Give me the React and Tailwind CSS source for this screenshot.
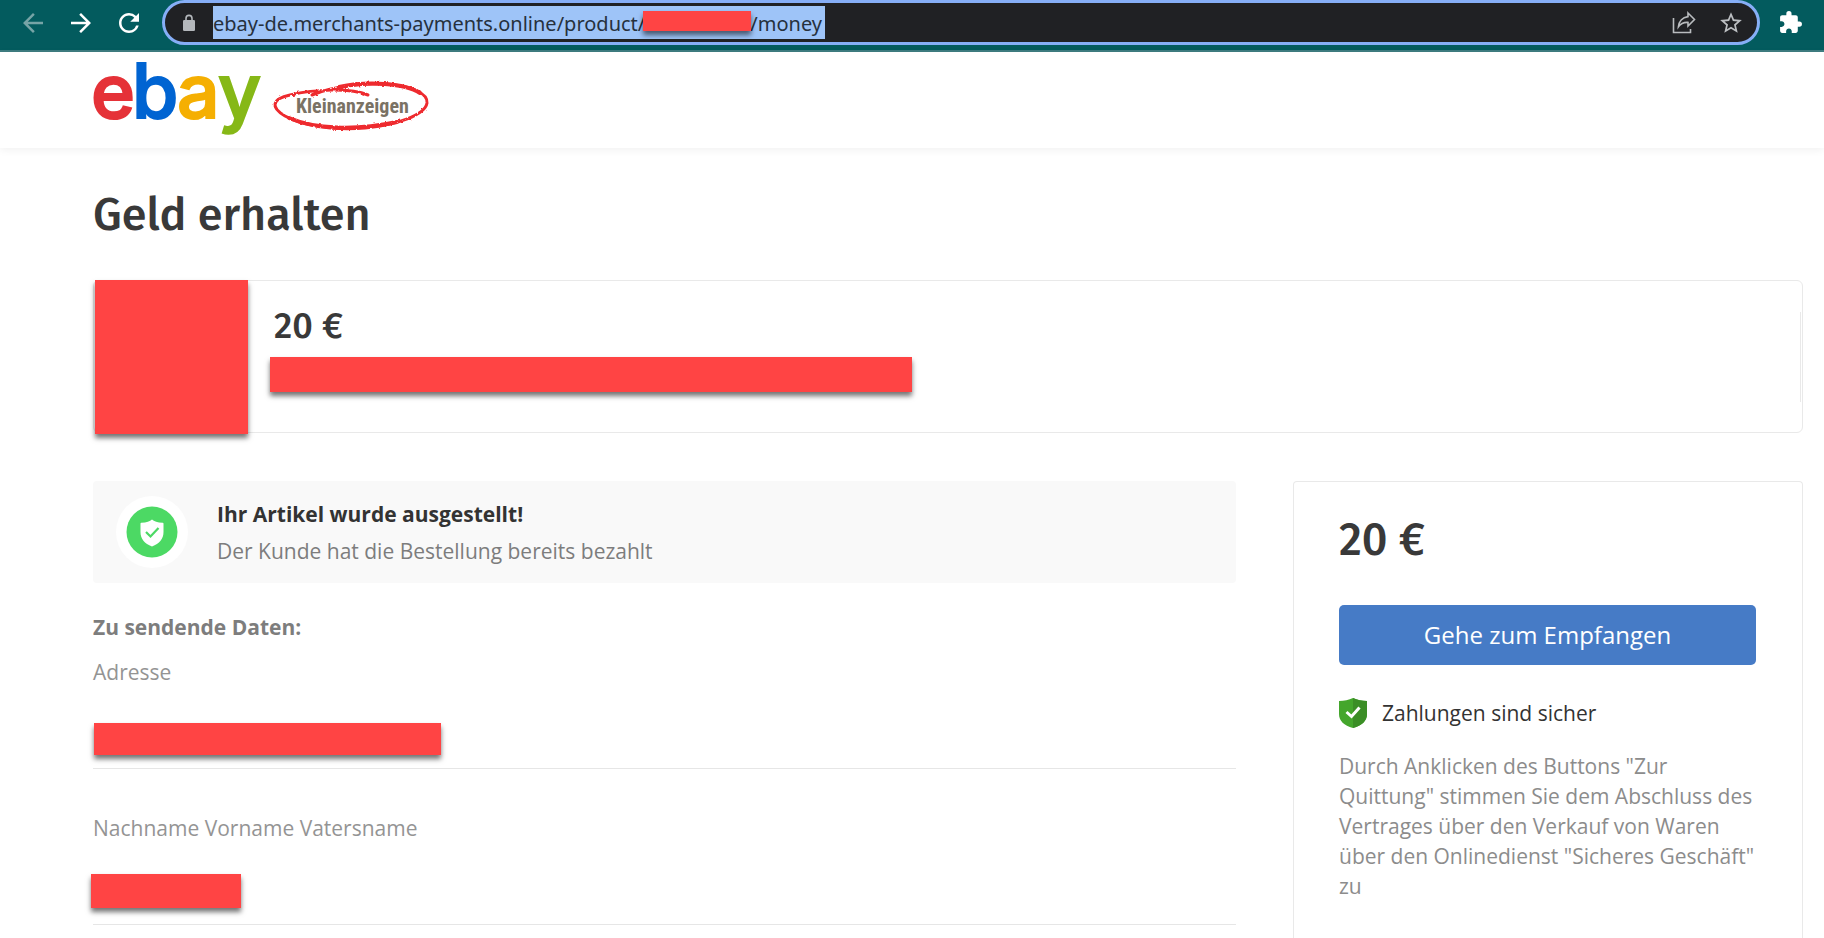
import React from "react";
import {
  MdArrowBack,
  MdArrowForward,
  MdRefresh,
  MdStarBorder,
  MdExtension,
} from "react-icons/md";

const BODY = "font-['Open_Sans','Noto_Sans',sans-serif]";
const DISPLAY = "font-['Fira_Sans','Noto_Sans','Open_Sans',sans-serif] font-medium";

function Redaction({ className }) {
  return (
    <div
      aria-hidden="true"
      className={`bg-[#ff4444] shadow-[0_4px_5px_rgba(0,0,0,0.55)] ${className}`}
    />
  );
}

function LockIcon() {
  return (
    <svg width="14" height="18" viewBox="0 0 14 18" aria-hidden="true">
      <rect x="1" y="6" width="12" height="11" rx="1.3" fill="#b4b8bc" />
      <path d="M4 7V4.4a3 3 0 0 1 6 0V7" fill="none" stroke="#b4b8bc" strokeWidth="1.6" />
    </svg>
  );
}

function ShareIcon() {
  return (
    <svg
      width="24"
      height="24"
      viewBox="0 0 24 24"
      fill="none"
      stroke="#b9bcbf"
      strokeWidth="1.6"
      aria-hidden="true"
    >
      <path d="M1.5 7v14.5H18.5V18" />
      <path d="M16 2l6.5 6.5L16 15v-3.6c-4.2-.3-7.2 1-9.6 4.4C6.8 10.6 10.3 6.4 16 5.6Z" />
    </svg>
  );
}

function Toolbar() {
  const url =
    "ebay-de.merchants-payments.online/product/4" + "\u00a0".repeat(18) + "/money";
  return (
    <div className="flex items-start gap-[18px] border-b-2 border-[#3f7d81] bg-[#035b5e] pr-[21px] pb-[5px] pl-[18px]">
      <div className="flex h-[45px] items-center gap-[18px] text-white">
        <button type="button" aria-label="Zurück" className="text-[#76a4a6]">
          <MdArrowBack size={30} />
        </button>
        <button type="button" aria-label="Vorwärts">
          <MdArrowForward size={30} />
        </button>
        <button type="button" aria-label="Neu laden">
          <MdRefresh size={30} />
        </button>
      </div>
      <div className="flex h-[45px] min-w-0 flex-1 items-center rounded-full border-3 border-[#86aef6] bg-[#202124] pr-[13px] pl-[17px]">
        <LockIcon />
        <div className="relative ml-[17px]">
          <input
            type="text"
            readOnly
            aria-label="Adresse und Suche"
            value={url}
            className="block h-[33px] w-[612px] bg-[#9ec4f8] pt-[2px] font-['Noto_Sans',sans-serif] text-[20px] text-[#26313d] outline-none"
          />
          <Redaction className="absolute top-[5px] left-[430px] h-[20px] w-[108px]" />
        </div>
        <div className="ml-auto flex items-center gap-[22px] text-[#bcbfc2]">
          <button type="button" aria-label="Teilen">
            <ShareIcon />
          </button>
          <button type="button" aria-label="Lesezeichen">
            <MdStarBorder size={26} />
          </button>
        </div>
      </div>
      <button
        type="button"
        aria-label="Erweiterungen"
        className="flex h-[45px] items-center text-white"
      >
        <MdExtension size={25} />
      </button>
    </div>
  );
}

function Logo() {
  return (
    <svg
      width="340"
      height="84"
      viewBox="0 0 340 84"
      className="overflow-visible"
      role="img"
      aria-label="ebay Kleinanzeigen"
    >
      <defs>
        <filter id="crayon" x="-5%" y="-15%" width="110%" height="130%">
          <feTurbulence type="fractalNoise" baseFrequency="0.35" numOctaves="2" seed="4" />
          <feDisplacementMap in="SourceGraphic" scale="3" />
        </filter>
      </defs>
      <g
        fontFamily="Inter, 'Liberation Sans', Arial, sans-serif"
        fontSize="75"
        fontWeight="500"
        strokeWidth="2"
      >
        <text x="-2" y="57" fill="#e53238" stroke="#e53238">e</text>
        <text x="39" y="57" fill="#0064d2" stroke="#0064d2">b</text>
        <text x="84" y="57" fill="#f5af02" stroke="#f5af02">a</text>
        <text x="125" y="57" fill="#86b817" stroke="#86b817">y</text>
      </g>
      <text
        x="203"
        y="52"
        fill="#7a7264"
        fontFamily="'Roboto Condensed', Roboto, sans-serif"
        fontWeight="700"
        fontSize="20"
      >
        Kleinanzeigen
      </text>
      <g fill="none" stroke="#ee2a2e" strokeLinecap="round" filter="url(#crayon)">
        <path
          d="M219 34C240 25 272 22 294 23C318 25 335 32 334 42C332 54 304 64 272 67C238 70 208 64 192 55C177 46 179 38 197 34C222 28 258 27 275 34"
          strokeWidth="3"
        />
        <path d="M246 26C274 20 312 22 327 32" strokeWidth="4" />
        <path d="M196 57C222 68 262 70 304 61" strokeWidth="4" />
      </g>
    </svg>
  );
}

function SealIcon() {
  return (
    <span className="flex size-[72px] shrink-0 items-center justify-center rounded-full bg-white">
      <svg width="52" height="52" viewBox="0 0 52 52" aria-hidden="true">
        <circle cx="26" cy="26" r="25.5" fill="#4cd964" />
        <path
          d="M26 13.5c2 2 5.500 3.200 10.500 3.200.6 0 1 .4 1 1V26c0 7-4 11.500-11.500 14.500C18.500 37.500 14.500 33 14.500 26v-8.300c0-.6.4-1 1-1 5 0 8.500-1.200 10.500-3.200Z"
          fill="#fff"
        />
        <path d="M20 26l4.500 4.500 8-8.500" fill="none" stroke="#4cd964" strokeWidth="2.2" />
      </svg>
    </span>
  );
}

function SafeIcon() {
  return (
    <svg width="28" height="30" viewBox="0 0 28 30" className="shrink-0" aria-hidden="true">
      <path d="M14 0C18 2 23 3 28 3v13c0 7-5 11.500-14 14C5 27.500 0 23 0 16V3c5 0 10-1 14-3Z" fill="#44a62c" />
      <path d="M14 0C18 2 23 3 28 3v13c0 7-5 11.500-14 14Z" fill="#3b8e26" />
      <path d="M7.5 14l5 4.500 8-9" fill="none" stroke="#fff" strokeWidth="3" />
    </svg>
  );
}

function Field({ label, children }) {
  return (
    <div className="border-b border-[#e6e6e6]">
      <dt className="text-[#949494]">{label}</dt>
      <dd>{children}</dd>
    </div>
  );
}

export default function App() {
  return (
    <div className={`min-h-screen bg-white text-[21px] leading-[30px] text-[#333] ${BODY}`}>
      <Toolbar />
      <header className="h-[96px] pt-[9px] pl-[93px] shadow-[0_2px_8px_rgba(0,0,0,0.06)]">
        <Logo />
      </header>

      <main className="pt-[37px] pr-[21px] pl-[93px]">
        <h1 className={`text-[45px] leading-[60px] text-[#393939] ${DISPLAY}`}>Geld erhalten</h1>

        <section className="mt-[35px] flex h-[153px] items-center justify-between rounded-md border border-[#e9e9e9]">
          <div className="flex self-start">
            <Redaction className="-mt-px ml-px h-[154px] w-[153px]" />
            <div className="ml-[22px]">
              <p className={`mt-[24px] pl-[4px] text-[36px] leading-[42px] text-[#393939] ${DISPLAY}`}>
                20 €
              </p>
              <Redaction className="mt-[10px] h-[35px] w-[642px]" />
            </div>
          </div>
          <div className="h-[90px] border-r border-[#e9e9e9] mr-px" />
        </section>

        <div className="mt-[48px] flex gap-[57px]">
          <div className="min-w-0 flex-1">
            <section className="flex h-[102px] items-center gap-[29px] rounded bg-[#f9f9f9] pl-[23px]">
              <SealIcon />
              <div className="flex flex-col gap-[7px]">
                <p className="font-bold">Ihr Artikel wurde ausgestellt!</p>
                <p className="text-[#7d7d7d]">Der Kunde hat die Bestellung bereits bezahlt</p>
              </div>
            </section>

            <h2 className="mt-[29px] font-bold text-[#7d7d7d]">Zu sendende Daten:</h2>
            <dl className="mt-[15px] flex flex-col gap-[44px]">
              <Field label="Adresse">
                <Redaction className="mt-[36px] mb-[13px] ml-px h-[32px] w-[347px]" />
              </Field>
              <Field label="Nachname Vorname Vatersname">
                <Redaction className="mt-[31px] mb-[16px] -ml-[2px] h-[34px] w-[150px]" />
              </Field>
            </dl>
          </div>

          <aside className="w-[510px] shrink-0 rounded-t border border-b-0 border-[#e9e9e9] pt-[28px] pr-[46px] pb-[40px] pl-[45px]">
            <p className={`text-[45px] leading-[60px] text-[#393939] ${DISPLAY}`}>20 €</p>
            <button
              type="button"
              className="mt-[35px] h-[60px] w-full rounded-[5px] bg-[#467bc6] text-[24px] text-white"
            >
              Gehe zum Empfangen
            </button>
            <p className="mt-[33px] flex items-center gap-[15px]">
              <SafeIcon />
              Zahlungen sind sicher
            </p>
            <p className="mt-[23px] text-[#8c8c8c]">
              Durch Anklicken des Buttons "Zur Quittung" stimmen Sie dem Abschluss des Vertrages
              über den Verkauf von Waren über den Onlinedienst "Sicheres Geschäft" zu
            </p>
          </aside>
        </div>
      </main>
    </div>
  );
}
